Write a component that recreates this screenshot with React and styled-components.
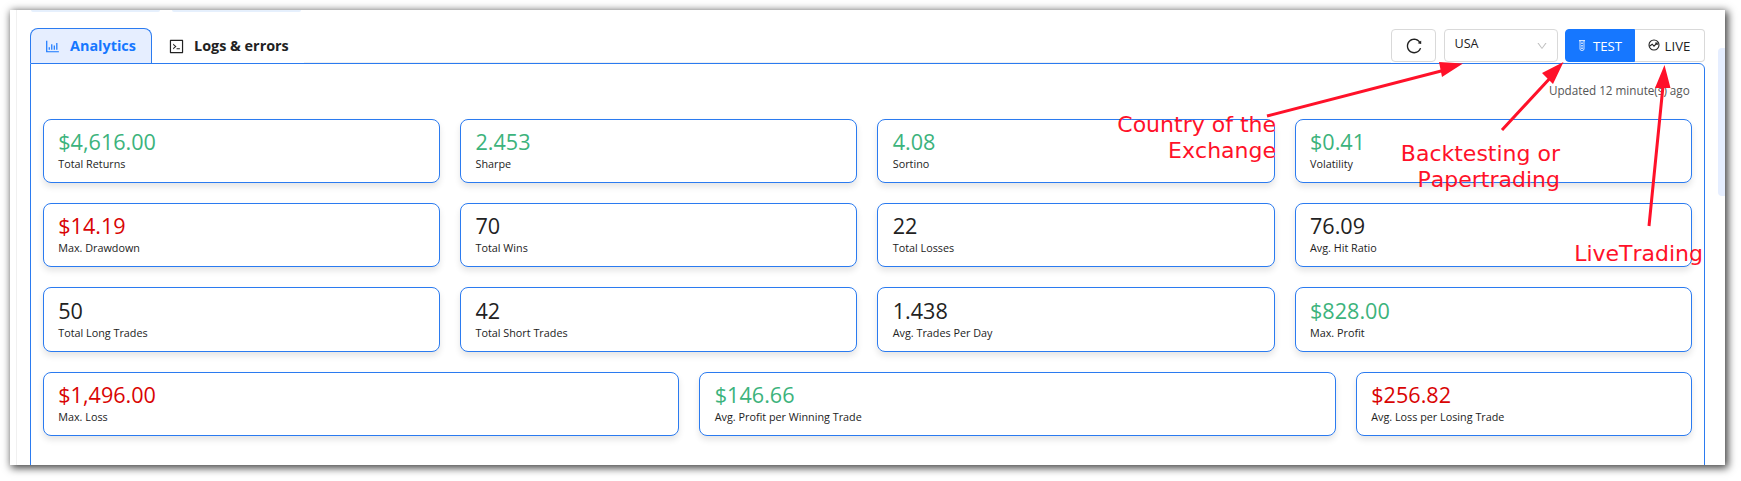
import React from "react";
import styled, { createGlobalStyle } from "styled-components";
import { AiOutlineBarChart, AiOutlineCode, AiOutlineReload, AiOutlineDown } from "react-icons/ai";

const Global = createGlobalStyle`
  * { box-sizing: border-box; }
  body { margin: 0; background: #fff; font-family: "Open Sans", "Noto Sans", sans-serif; color: #222; overflow: hidden; }
`;
const Stage = styled.div`
  position: relative;
  width: 1741px;
  height: 481px;
  padding: 10px 16px 16px 10px;
  overflow: hidden;
`;
const Sheet = styled.main`
  display: flex;
  height: 455px;
  width: 1715px;
  padding-left: 6px;
  background: #fff;
  box-shadow: 2px 2px 8px 1px rgba(0, 0, 0, 0.75);
`;
const Content = styled.div`
  flex: 1;
  height: 455px;
  border-left: 1px solid #f0f0f0;
  padding: 0 13px;
  overflow: hidden;
`;
const ScrollThumb = styled.div`
  width: 7px;
  height: 148px;
  margin-top: 38px;
  border-radius: 4px 0 0 4px;
  background: #e6eeff;
`;
const Stubs = styled.div`
  display: flex;
  gap: 12px;
  height: 18px;
  padding-left: 1px;
`;
const Stub = styled.div`
  width: 129px;
  height: 2px;
  border-radius: 0 0 4px 4px;
  background: #e6f0fd;
`;
const Header = styled.header`
  display: flex;
  height: 35px;
`;
const Tabs = styled.nav`
  display: flex;
  flex: 1;
  &::after {
    content: "";
    flex: 1;
    border-bottom: 1px solid #f0f0f0;
  }
`;
const Tab = styled.div`
  display: flex;
  align-items: center;
  gap: 9px;
  height: 35px;
  width: ${(p) => (p.$active ? 122 : 152)}px;
  padding: 0 0 0 ${(p) => (p.$active ? 13 : 15)}px;
  border: 1px solid ${(p) => (p.$active ? "#2b7bf0" : "transparent")};
  border-bottom: 0;
  border-radius: 8px 8px 0 0;
  background: ${(p) => (p.$active ? "#e6eeff" : "transparent")};
  color: ${(p) => (p.$active ? "#1677ff" : "#222")};
  font-size: 14.4px;
  font-weight: 700;
  white-space: nowrap;
  span { padding-bottom: 2px; }
`;
const Controls = styled.div`
  display: flex;
  padding-top: 1px;
`;
const IconButton = styled.button`
  display: flex;
  align-items: center;
  justify-content: center;
  width: 45px;
  height: 33px;
  margin-right: 8px;
  padding: 0;
  border: 1px solid #d9d9d9;
  border-radius: 4px;
  background: #fff;
  color: #222;
`;
const Select = styled.div`
  display: flex;
  align-items: center;
  justify-content: space-between;
  width: 114px;
  height: 33px;
  margin-right: 7px;
  padding: 0 9px 0 9.5px;
  border: 1px solid #d9d9d9;
  border-radius: 4px;
  font-size: 12.6px;
  svg { color: #bfbfbf; }
  span { padding-bottom: 5px; }
`;
const Mode = styled.button`
  display: flex;
  align-items: center;
  justify-content: center;
  gap: ${(p) => (p.$active ? 8 : 5)}px;
  width: 70px;
  height: 33px;
  padding: 0 ${(p) => (p.$active ? "0 0 1px" : "1px 0 0")};
  border: 1px solid ${(p) => (p.$active ? "#1677ff" : "#d9d9d9")};
  border-left-width: ${(p) => (p.$active ? 1 : 0)}px;
  border-radius: ${(p) => (p.$active ? "4px 0 0 4px" : "0 4px 4px 0")};
  background: ${(p) => (p.$active ? "#1677ff" : "#fff")};
  color: ${(p) => (p.$active ? "#fff" : "#222")};
  font: 13.2px "Open Sans", sans-serif;
  svg { margin-bottom: 1px; }
`;
const Panel = styled.section`
  width: 1675px;
  height: 420px;
  padding: 18px 12.25px 0 11.75px;
  border: 1px solid #2b7bf0;
  border-radius: 0 6px 0 0;
`;
const Updated = styled.div`
  height: 37px;
  padding-right: 2px;
  color: #555;
  font-size: 11.7px;
  line-height: 16px;
  text-align: right;
`;
const Rows = styled.div`
  display: flex;
  flex-direction: column;
  gap: 20px;
`;
const Row = styled.div`
  display: grid;
  grid-template-columns: ${(p) => p.$columns};
  gap: 20px;
`;
const Card = styled.article`
  height: 64.24px;
  padding: 7.12px 14.5px;
  border: 1px solid #2b7bf0;
  border-radius: 8px;
  background: #fff;
  box-shadow: 0 4px 6px rgba(0, 0, 0, 0.1);
`;
const tones = { good: "#3cb37c", bad: "#d90404", plain: "#222" };
const Value = styled.div`
  color: ${(p) => tones[p.$tone]};
  font-size: 21.6px;
  line-height: 30px;
`;
const Label = styled.div`
  font-size: 10.8px;
  line-height: 14px;
`;
const Note = styled.div`
  position: absolute;
  right: ${(p) => 1741 - p.$right}px;
  top: ${(p) => p.$top}px;
  color: #ff1129;
  font: 22px/26px "DejaVu Sans", sans-serif;
  font-kerning: none;
  text-align: right;
  white-space: pre;
`;
const Arrows = styled.svg`
  position: absolute;
  inset: 0;
`;

const quarter = "repeat(4, 1fr)";
const rows = [
  [quarter, [["$4,616.00", "Total Returns", "good"], ["2.453", "Sharpe", "good"], ["4.08", "Sortino", "good"], ["$0.41", "Volatility", "good"]]],
  [quarter, [["$14.19", "Max. Drawdown", "bad"], ["70", "Total Wins", "plain"], ["22", "Total Losses", "plain"], ["76.09", "Avg. Hit Ratio", "plain"]]],
  [quarter, [["50", "Total Long Trades", "plain"], ["42", "Total Short Trades", "plain"], ["1.438", "Avg. Trades Per Day", "plain"], ["$828.00", "Max. Profit", "good"]]],
  ["1fr 1fr 336px", [["$1,496.00", "Max. Loss", "bad"], ["$146.66", "Avg. Profit per Winning Trade", "good"], ["$256.82", "Avg. Loss per Losing Trade", "bad"]]],
];

const TubeIcon = () => (
  <svg width="6" height="11" viewBox="0 0 6 11" fill="none" stroke="currentColor">
    <path strokeWidth="1" d="M0 .7h6" />
    <path strokeWidth=".8" d="M1 1v8q0 1.500 2 1.500t2-1.500V1" />
    <path strokeWidth="1.400" d="M3 2.500v1.500M3 5v1.500M3 7.500v1.500" />
  </svg>
);
const LiveIcon = () => (
  <svg width="12" height="12" viewBox="0 0 12 12" fill="none" stroke="currentColor" strokeWidth="1.1">
    <circle cx="6" cy="6" r="5" />
    <path d="M1.500 7.200 4.200 5.200 6 7.200 9 4M7.200 4h2v2" />
  </svg>
);

export default function App() {
  return (
    <Stage>
      <Global />
      <Sheet>
        <Content>
          <Stubs><Stub /><Stub /></Stubs>
          <Header>
            <Tabs>
              <Tab $active><AiOutlineBarChart size={17} /><span>Analytics</span></Tab>
              <Tab><AiOutlineCode size={17} /><span>Logs &amp; errors</span></Tab>
            </Tabs>
            <Controls>
              <IconButton><AiOutlineReload size={18} /></IconButton>
              <Select><span>USA</span><AiOutlineDown size={12} /></Select>
              <Mode $active><TubeIcon />TEST</Mode>
              <Mode><LiveIcon />LIVE</Mode>
            </Controls>
          </Header>
          <Panel>
            <Updated>Updated 12 minute(s) ago</Updated>
            <Rows>
              {rows.map(([columns, cards], i) => (
                <Row key={i} $columns={columns}>
                  {cards.map(([value, label, tone]) => (
                    <Card key={label}>
                      <Value $tone={tone}>{value}</Value>
                      <Label>{label}</Label>
                    </Card>
                  ))}
                </Row>
              ))}
            </Rows>
          </Panel>
        </Content>
        <ScrollThumb />
      </Sheet>
      <Arrows width="1741" height="481" fill="#ff1129" stroke="#ff1129">
        <path strokeWidth="3" d="M1267 116 1445 70M1502 130 1552 76M1649 226 1663 86" />
        <path stroke="none" d="M1463 63.500 1439 62 1442 77ZM1563.500 62 1542 73 1553 84ZM1664.500 65 1655 88 1670.500 88Z" />
      </Arrows>
      <Note $right={1276} $top={112}>{"Country of the\nExchange"}</Note>
      <Note $right={1560} $top={141}>{"Backtesting or\nPapertrading"}</Note>
      <Note $right={1703} $top={241}>LiveTrading</Note>
    </Stage>
  );
}
